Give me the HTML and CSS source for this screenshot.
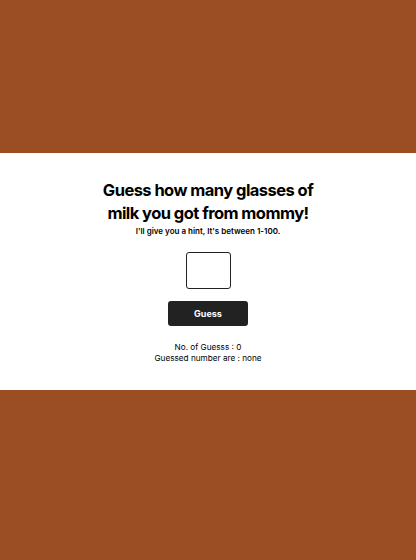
FILE: index.html
```html
<!DOCTYPE html>
<html>
<head>
<meta charset="utf-8">
<link rel="stylesheet" href="styles.css">
</head>
<body>
<main class="panel">
  <h1 class="title">Guess how many glasses of<br>milk you got from mommy!</h1>
  <p class="hint">I'll give you a hint, It's between 1-100.</p>
  <input class="guess-input" type="text">
  <button class="guess-btn">Guess</button>
  <div class="stats">
    <p>No. of Guesss : 0</p>
    <p>Guessed number are : none</p>
  </div>
</main>
</body>
</html>
```

FILE: styles.css
```css
html, body {
  margin: 0;
  padding: 0;
}
body {
  background: #9b4d24;
  height: 560px;
  padding-top: 153px;
  box-sizing: border-box;
  font-family: "Inter", "DejaVu Sans", sans-serif;
  color: #000;
}
.panel {
  background: #fff;
  height: 237px;
  box-sizing: border-box;
  padding-top: 26px;
  display: flex;
  flex-direction: column;
  align-items: center;
  text-align: center;
}
.title {
  margin: 0;
  font-size: 16.5px;
  line-height: 23px;
  font-weight: 700;
  letter-spacing: -0.55px;
}
.hint {
  margin: 0;
  font-size: 8px;
  line-height: 12px;
  font-weight: 600;
}
.guess-input {
  margin-top: 15px;
  width: 45px;
  height: 37px;
  box-sizing: border-box;
  border: 1px solid #222;
  border-radius: 3px;
  padding: 0;
}
.guess-btn {
  margin-top: 12px;
  width: 80px;
  height: 25px;
  border: none;
  border-radius: 3px;
  background: #222;
  color: #fff;
  font-family: inherit;
  font-size: 9px;
  font-weight: 700;
}
.stats {
  margin-top: 16px;
}
.stats p {
  margin: 0;
  font-size: 8.2px;
  line-height: 11px;
}
```
